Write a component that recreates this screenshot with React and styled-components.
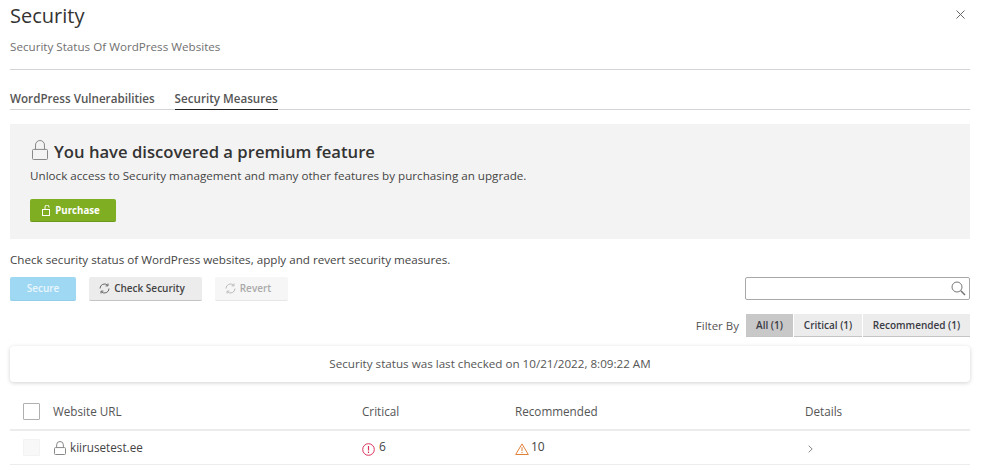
import React from 'react';
import styled, { createGlobalStyle } from 'styled-components';

const GlobalStyle = createGlobalStyle`
  html, body { margin: 0; padding: 0; background: #fff; }
  body { font-family: "Open Sans", "Liberation Sans", sans-serif; color: #333; overflow: hidden; }
  * { box-sizing: border-box; }
`;

const Page = styled.div`
  width: 981px;
  height: 470px;
  padding: 0 11px 0 10px;
  overflow: hidden;
`;

const Header = styled.header`
  display: flex;
  justify-content: space-between;
  align-items: flex-start;
  height: 70px;
  border-bottom: 1px solid #d4d4d8;
`;

const Title = styled.h1`
  margin: 0;
  padding-top: 1px;
  font-size: 20px;
  line-height: 30px;
  font-weight: 400;
  color: #333;
`;

const Subtitle = styled.p`
  margin: 8px 0 0;
  font-size: 11.65px;
  line-height: 16px;
  color: #707070;
`;

const Close = styled.span`
  display: flex;
  margin: 10px 5px 0 0;
  color: #666;
`;

const Tabs = styled.nav`
  display: flex;
  gap: 20px;
  height: 40px;
  padding-top: 21px;
  border-bottom: 1px solid #d4d4d8;
`;

const Tab = styled.span`
  height: 19px;
  font-size: 11.65px;
  line-height: 16px;
  font-weight: 600;
  color: #555;
  border-bottom: ${({ $active }) => ($active ? '1px solid #222' : 'none')};
`;

const Banner = styled.section`
  margin-top: 14px;
  height: 115px;
  padding: 15px 20px 0;
  background: #f3f3f3;
`;

const BannerTitle = styled.h2`
  display: flex;
  align-items: center;
  gap: 6px;
  margin: 0;
  height: 26px;
  font-size: 16.65px;
  line-height: 26px;
  font-weight: 600;
  color: #333;
`;

const BannerLock = styled.span`
  display: flex;
  margin: -5px 0 0 2px;
`;

const BannerText = styled.p`
  margin: 2px 0 0;
  font-size: 11.65px;
  line-height: 18px;
  color: #444;
`;

const PurchaseButton = styled.button`
  display: flex;
  align-items: center;
  justify-content: center;
  gap: 4px;
  width: 86px;
  height: 23px;
  margin-top: 14px;
  padding: 1px 4px 0 0;
  border: 0;
  border-bottom: 1px solid #6c9a1c;
  border-radius: 2px;
  background: #7fae23;
  color: #fff;
  font: 700 9.7px "Open Sans", sans-serif;
`;

const Intro = styled.p`
  margin: 13px 0 0;
  font-size: 11.65px;
  line-height: 16px;
  color: #444;
`;

const Toolbar = styled.div`
  display: flex;
  align-items: flex-start;
  gap: 13px;
  margin-top: 9px;
`;

const ActionButton = styled.button`
  display: flex;
  align-items: center;
  justify-content: center;
  gap: 4px;
  width: ${({ $width }) => $width}px;
  height: 24px;
  padding: 0 ${({ $inset }) => $inset || 0}px 1px 0;
  border: 0;
  border-bottom: 1px solid ${({ $line }) => $line};
  border-radius: 2px;
  background: ${({ $bg }) => $bg};
  color: ${({ $color }) => $color};
  font: 600 10px "Open Sans", sans-serif;
`;

const Search = styled.div`
  display: flex;
  align-items: center;
  justify-content: flex-end;
  width: 225px;
  height: 23px;
  margin-left: auto;
  padding-right: 3px;
  border: 1px solid #a8a8a8;
  border-radius: 2px;
  color: #777;
`;

const FilterRow = styled.div`
  display: flex;
  align-items: center;
  justify-content: flex-end;
  gap: 1px;
  margin-top: 13px;
  height: 23px;
`;

const FilterLabel = styled.span`
  margin-right: 6px;
  font-size: 11.5px;
  color: #555;
`;

const FilterButton = styled.button`
  width: ${({ $width }) => $width}px;
  height: 23px;
  padding: 0;
  border: 0;
  border-bottom: 1px solid #c4c4c4;
  background: ${({ $active }) => ($active ? '#c8c8c8' : '#ececec')};
  color: #3a3a44;
  font: 600 10px "Open Sans", sans-serif;
`;

const StatusCard = styled.div`
  display: flex;
  align-items: center;
  justify-content: center;
  height: 36px;
  margin-top: 9px;
  padding-bottom: 1px;
  border-radius: 4px;
  background: #fff;
  box-shadow: 0 1px 4px rgba(0, 0, 0, 0.18);
  font-size: 11.65px;
  color: #555;
`;

const Table = styled.div`
  margin-top: 12px;
`;

const Row = styled.div`
  display: grid;
  grid-template-columns: 43px 309px 153px 290px 1fr;
  align-items: center;
  height: ${({ $height }) => $height}px;
  border-bottom: ${({ $rule }) => $rule};
  color: ${({ $color }) => $color};
`;

const CheckBox = styled.span`
  display: block;
  width: 17px;
  height: 17px;
  margin-left: 13px;
  border: 1px solid ${({ $disabled }) => ($disabled ? '#f3f3f3' : '#b0b0b0')};
  border-radius: 1px;
  background: ${({ $disabled }) => ($disabled ? '#f8f8f8' : '#fff')};
`;

const Cell = styled.span`
  display: flex;
  align-items: center;
  gap: ${({ $gap }) => $gap || 0}px;
  padding-bottom: 2px;
  font-size: ${({ $size }) => $size || 11.7}px;
`;

const RowIcon = styled.span`
  display: flex;
  margin: ${({ $margin }) => $margin || '5px 0 0'};
`;

const LockIcon = ({ w, h, color }) => (
  <svg width={w} height={h} viewBox={`0 0 ${w} ${h}`} fill="none" stroke={color} strokeWidth="1">
    <rect x="0.5" y={h * 0.47} width={w - 1} height={h * 0.53 - 0.5} rx="1" />
    <path d={`M${w * 0.22} ${h * 0.47}V${w * 0.28 + 0.5}a${w * 0.28} ${w * 0.28} 0 0 1 ${w * 0.56} 0V${h * 0.47}`} />
  </svg>
);

const OpenLockIcon = () => (
  <svg width="9" height="11" viewBox="0 0 9 11" fill="none" stroke="#fff" strokeWidth="1">
    <rect x="0.5" y="4.5" width="7" height="6" />
    <path d="M3 4.5V2a2 2 0 0 1 4 0v.5" />
  </svg>
);

const RefreshIcon = ({ color }) => (
  <svg width="11" height="11" viewBox="0 0 11 11" fill="none" stroke={color} strokeWidth="1">
    <path d="M1 5.5A4.5 4.5 0 0 1 8.6 2.2" />
    <path d="M10 5.5A4.5 4.5 0 0 1 2.4 8.8" />
    <path d="M9 0.5v2.4H6.6M2 10.5V8.1h2.4" />
  </svg>
);

const SearchIcon = () => (
  <svg width="15" height="15" viewBox="0 0 15 15" fill="none" stroke="currentColor" strokeWidth="1">
    <circle cx="6" cy="6" r="5" />
    <path d="M9.8 9.8L14 14" strokeWidth="1.6" />
  </svg>
);

const CloseIcon = () => (
  <svg width="9" height="9" viewBox="0 0 9 9" stroke="currentColor" strokeWidth="1">
    <path d="M0.5 0.5L8.5 8.5M8.5 0.5L0.5 8.5" />
  </svg>
);

const CriticalIcon = () => (
  <svg width="13" height="13" viewBox="0 0 13 13" fill="none" stroke="#d8325a" strokeWidth="1">
    <circle cx="6.5" cy="6.5" r="5.8" />
    <path d="M6.5 3v4.4M6.5 8.6v1.3" strokeWidth="1.2" />
  </svg>
);

const WarningIcon = () => (
  <svg width="14" height="12" viewBox="0 0 14 12" fill="none" stroke="#e0813a" strokeWidth="1">
    <path d="M7 0.9L13.3 11.5H0.7Z" />
    <path d="M7 4.2v4M7 9v1.2" />
  </svg>
);

const ChevronIcon = () => (
  <svg width="5" height="8" viewBox="0 0 5 8" fill="none" stroke="#888" strokeWidth="1">
    <path d="M0.7 0.7L4.2 4L0.7 7.3" />
  </svg>
);

const App = () => (
  <>
    <GlobalStyle />
    <Page>
      <Header>
        <div>
          <Title>Security</Title>
          <Subtitle>Security Status Of WordPress Websites</Subtitle>
        </div>
        <Close><CloseIcon /></Close>
      </Header>

      <Tabs>
        <Tab>WordPress Vulnerabilities</Tab>
        <Tab $active>Security Measures</Tab>
      </Tabs>

      <Banner>
        <BannerTitle>
          <BannerLock><LockIcon w={16} h={20} color="#888" /></BannerLock>
          You have discovered a premium feature
        </BannerTitle>
        <BannerText>Unlock access to Security management and many other features by purchasing an upgrade.</BannerText>
        <PurchaseButton><OpenLockIcon />Purchase</PurchaseButton>
      </Banner>

      <Intro>Check security status of WordPress websites, apply and revert security measures.</Intro>

      <Toolbar>
        <ActionButton $width={66} $bg="#9fd8f3" $line="#93cde8" $color="#e9f6fc">Secure</ActionButton>
        <ActionButton $width={113} $inset={7} $bg="#ececec" $line="#c4c4c4" $color="#444">
          <RefreshIcon color="#666" />Check Security
        </ActionButton>
        <ActionButton $width={73} $inset={7} $bg="#f6f6f6" $line="#e6e6e6" $color="#aaa">
          <RefreshIcon color="#bbb" />Revert
        </ActionButton>
        <Search><SearchIcon /></Search>
      </Toolbar>

      <FilterRow>
        <FilterLabel>Filter By</FilterLabel>
        <FilterButton $width={47} $active>All (1)</FilterButton>
        <FilterButton $width={68}>Critical (1)</FilterButton>
        <FilterButton $width={107}>Recommended (1)</FilterButton>
      </FilterRow>

      <StatusCard>Security status was last checked on 10/21/2022, 8:09:22 AM</StatusCard>

      <Table>
        <Row $height={37} $rule="2px solid #ececec" $color="#555">
          <CheckBox />
          <Cell>Website URL</Cell>
          <Cell>Critical</Cell>
          <Cell>Recommended</Cell>
          <Cell>Details</Cell>
        </Row>
        <Row $height={34} $rule="1px solid #ececec" $color="#444">
          <CheckBox $disabled />
          <Cell $gap={4}><RowIcon $margin="3px 0 0 1px"><LockIcon w={12} h={14} color="#888" /></RowIcon>kiirusetest.ee</Cell>
          <Cell $gap={4} $size={12}><RowIcon><CriticalIcon /></RowIcon>6</Cell>
          <Cell $gap={2} $size={12}><RowIcon><WarningIcon /></RowIcon>10</Cell>
          <Cell><RowIcon $margin="4px 0 0 3px"><ChevronIcon /></RowIcon></Cell>
        </Row>
      </Table>
    </Page>
  </>
);

export default App;
